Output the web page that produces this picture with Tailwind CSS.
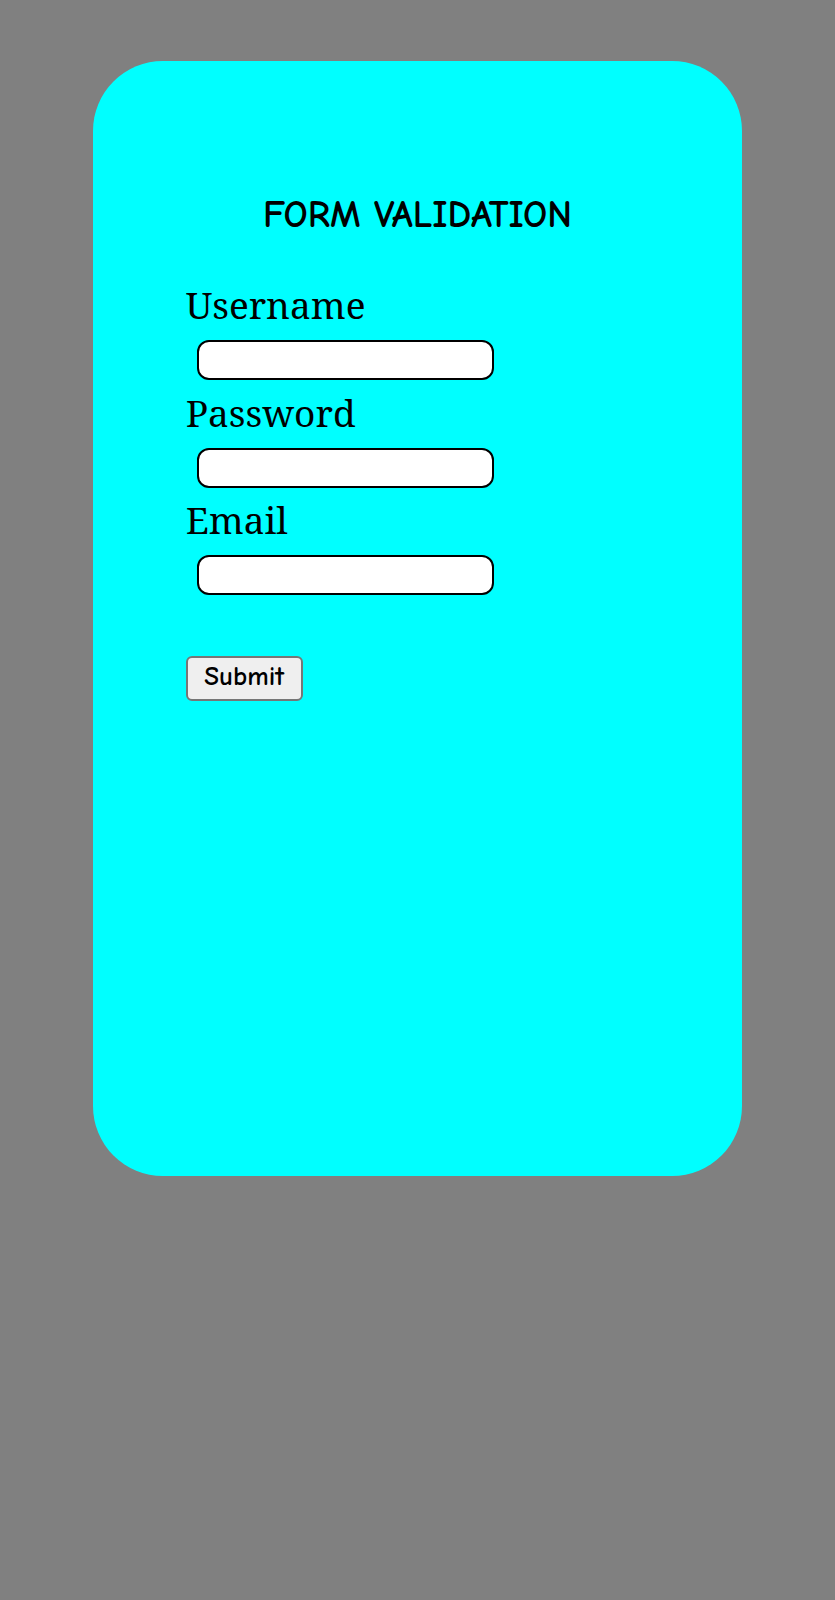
<!DOCTYPE html>
<html lang="en">
<head>
<meta charset="utf-8">
<meta name="viewport" content="width=device-width, initial-scale=1">
<title>Form Validation</title>
<script src="https://cdn.jsdelivr.net/npm/@tailwindcss/browser@4"></script>
</head>
<body class="min-h-screen bg-[#808080] text-black">
<main class="flow-root">
  <form class="mx-[11.1%] mt-[61px] min-h-[1115px] rounded-[70px] bg-[#00ffff] px-[93px] pt-[128px]">
    <h1 class="text-center font-['Comic_Neue','Roboto',sans-serif] text-[38px] leading-[52px] font-bold">FORM VALIDATION</h1>
    <div class="mt-[39px] font-['Noto_Serif','DejaVu_Serif',serif] text-[37px]">
      <div class="pb-2">
        <label for="username" class="block leading-[50px]">Username</label>
        <input id="username" type="text" class="mt-[10px] ml-[11px] block h-10 w-[297px] max-w-full rounded-xl border-2 border-black bg-white px-2 text-xl">
      </div>
      <div class="pb-[7px]">
        <label for="password" class="block leading-[50px]">Password</label>
        <input id="password" type="password" class="mt-[10px] ml-[11px] block h-10 w-[297px] max-w-full rounded-xl border-2 border-black bg-white px-2 text-xl">
      </div>
      <div>
        <label for="email" class="block leading-[50px]">Email</label>
        <input id="email" type="text" class="mt-[10px] ml-[11px] block h-10 w-[297px] max-w-full rounded-xl border-2 border-black bg-white px-2 text-xl">
      </div>
    </div>
    <button type="submit" class="mt-[61px] block h-[45px] w-[117px] rounded-md border-2 border-[#767676] bg-[#efefef] pb-1 font-['Comic_Neue','Roboto',sans-serif] text-[27px] leading-8 font-bold">Submit</button>
  </form>
</main>
</body>
</html>
